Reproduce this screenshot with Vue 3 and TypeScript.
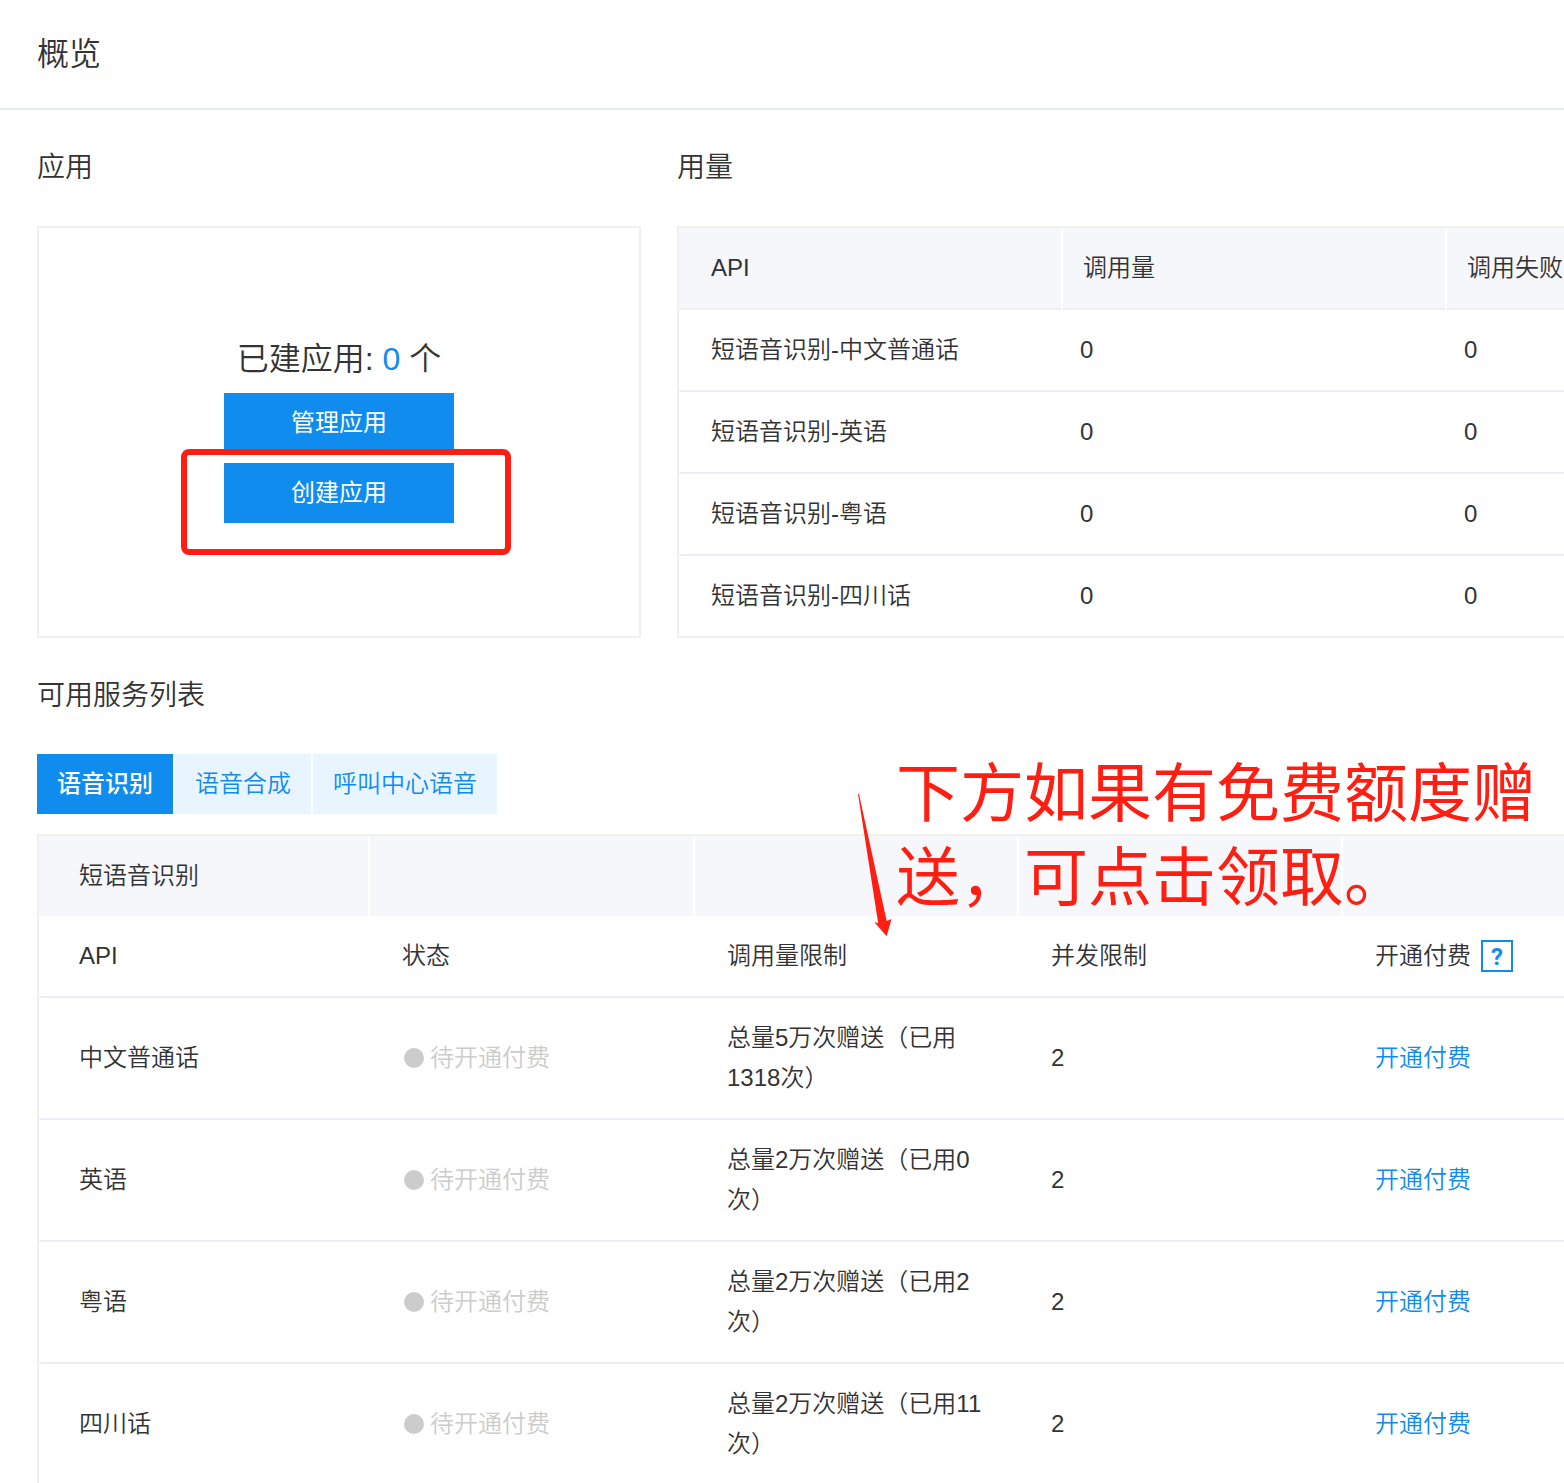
<script setup lang="ts">
import { ref } from 'vue'

interface UsageRow {
  api: string
  calls: number
  failures: number
}

interface ServiceRow {
  name: string
  quota: string
  concurrency: number
}

const appCount = ref<number>(0)
const tabs: string[] = ['语音识别', '语音合成', '呼叫中心语音']
const activeTab = ref<string>(tabs[0])

const usage: UsageRow[] = [
  { api: '短语音识别-中文普通话', calls: 0, failures: 0 },
  { api: '短语音识别-英语', calls: 0, failures: 0 },
  { api: '短语音识别-粤语', calls: 0, failures: 0 },
  { api: '短语音识别-四川话', calls: 0, failures: 0 },
]

const services: ServiceRow[] = [
  { name: '中文普通话', quota: '总量5万次赠送（已用1318次）', concurrency: 2 },
  { name: '英语', quota: '总量2万次赠送（已用0次）', concurrency: 2 },
  { name: '粤语', quota: '总量2万次赠送（已用2次）', concurrency: 2 },
  { name: '四川话', quota: '总量2万次赠送（已用11次）', concurrency: 2 },
]
</script>

<template>
  <div class="page">
    <header class="page-header">
      <h1>概览</h1>
    </header>

    <main class="content">
      <div class="overview">
        <section class="apps">
          <h2>应用</h2>
          <div class="card">
            <p class="count">已建应用: <a href="#apps">{{ appCount }}</a> 个</p>
            <div class="actions">
              <button type="button" class="primary">管理应用</button>
              <div class="marked">
                <button type="button" class="primary">创建应用</button>
                <span class="marker" aria-hidden="true"></span>
              </div>
            </div>
          </div>
        </section>

        <section class="usage">
          <h2>用量</h2>
          <table class="usage-table">
            <thead>
              <tr>
                <th scope="col">API</th>
                <th scope="col">调用量</th>
                <th scope="col">调用失败</th>
              </tr>
            </thead>
            <tbody>
              <tr v-for="row in usage" :key="row.api">
                <td>{{ row.api }}</td>
                <td>{{ row.calls }}</td>
                <td>{{ row.failures }}</td>
              </tr>
            </tbody>
          </table>
        </section>
      </div>

      <section class="services">
        <h2>可用服务列表</h2>
        <div class="tabs" role="tablist">
          <button
            v-for="tab in tabs"
            :key="tab"
            type="button"
            role="tab"
            class="tab"
            :class="{ active: tab === activeTab }"
            :aria-selected="tab === activeTab"
            @click="activeTab = tab"
          >{{ tab }}</button>
        </div>

        <table class="service-table">
          <colgroup>
            <col class="col-name" />
            <col class="col-status" />
            <col class="col-rest" />
            <col class="col-rest" />
            <col class="col-rest" />
          </colgroup>
          <thead>
            <tr class="group">
              <th scope="col">短语音识别</th>
              <th></th>
              <th></th>
              <th></th>
              <th></th>
            </tr>
            <tr class="labels">
              <th scope="col">API</th>
              <th scope="col">状态</th>
              <th scope="col">调用量限制</th>
              <th scope="col">并发限制</th>
              <th scope="col">
                <span class="with-help">开通付费<button type="button" class="help" aria-label="帮助">?</button></span>
              </th>
            </tr>
          </thead>
          <tbody>
            <tr v-for="row in services" :key="row.name">
              <td>{{ row.name }}</td>
              <td><span class="status">待开通付费</span></td>
              <td>{{ row.quota }}</td>
              <td>{{ row.concurrency }}</td>
              <td><a href="#pay">开通付费</a></td>
            </tr>
          </tbody>
        </table>

        <svg class="arrow" viewBox="0 0 36 144" width="36" height="144" aria-hidden="true">
          <path d="M1 1 L2 1 L29.7 128 L34.5 126 L29.7 143.3 L17.2 129 L21.2 130.3 Z" />
        </svg>
        <p class="note">下方如果有免费额度赠送，可点击领取。</p>
      </section>
    </main>
  </div>
</template>

<style>
body {
  margin: 0;
  background: #fff;
}
</style>

<style scoped>
.page {
  overflow: hidden;
  color: #333;
  font: 350 24px/40px "Liberation Sans", "Noto Sans CJK SC", sans-serif;
}

.page *,
.page *::before {
  box-sizing: border-box;
}

h1,
h2,
p {
  margin: 0;
  font-weight: inherit;
}

a {
  color: #108cee;
  text-decoration: none;
}

button {
  padding: 0;
  border: 0;
  font: inherit;
  cursor: pointer;
}

.page-header {
  padding: 0 37px;
  border-bottom: 2px solid #e6ebf0;
}

h1 {
  font-size: 32px;
  line-height: 108px;
}

h2 {
  font-size: 28px;
  line-height: 116px;
}

.content {
  padding-left: 37px;
}

.overview {
  display: flex;
  gap: 36px;
}

.apps {
  flex: 0 0 604px;
  display: flex;
  flex-direction: column;
}

.card {
  flex: 1;
  display: flex;
  flex-direction: column;
  align-items: center;
  justify-content: center;
  gap: 16px;
  border: 2px solid #f0f0f0;
}

.count {
  font-size: 32px;
  line-height: 36px;
}

.actions {
  display: flex;
  flex-direction: column;
  gap: 10px;
}

.primary {
  display: block;
  width: 230px;
  height: 60px;
  background: #108cee;
  color: #fff;
  font-weight: 400;
}

.marked {
  position: relative;
}

.marker {
  position: absolute;
  inset: -14px -57px -32px -43px;
  border: 6px solid #ff1f12;
  border-radius: 8px;
  pointer-events: none;
}

table {
  border-collapse: separate;
  border-spacing: 0;
  table-layout: fixed;
  border: 2px solid #f0f0f0;
  border-bottom: 0;
}

th,
td {
  padding: 20px 32px;
  border-bottom: 2px solid #ebeef8;
  text-align: left;
  vertical-align: middle;
  font-weight: inherit;
}

.usage-table {
  width: 1156px;
}

.usage-table th {
  padding-left: 20px;
  border-right: 2px solid #fff;
  border-bottom-color: #f0f0f0;
  background: linear-gradient(#f5f7fb, #f5f7fb) padding-box;
}

.usage-table td {
  padding-left: 17px;
}

.usage-table th:first-child,
.usage-table td:first-child {
  padding-left: 32px;
}

.usage-table tr:last-child td {
  border-bottom-color: #f0f0f0;
}

.services {
  position: relative;
}

.tabs {
  display: flex;
  gap: 2px;
  margin-bottom: 20px;
}

.tab {
  padding: 10px 20px;
  background: #e8f5ff;
  color: #108cee;
}

.tab.active {
  background: #108cee;
  color: #fff;
  font-weight: 500;
}

.service-table {
  width: 1632px;
}

.col-name {
  width: 331px;
}

.col-status {
  width: 325px;
}

.col-rest {
  width: 324px;
}

.service-table th:first-child,
.service-table td:first-child {
  padding-left: 40px;
}

.group th {
  border-right: 2px solid #fff;
  border-bottom: 0;
  background: #f5f7fb;
}

.with-help {
  display: flex;
  align-items: center;
  gap: 10px;
}

.help {
  width: 32px;
  height: 32px;
  border: 2px solid #108cee;
  background: #fff;
  color: #108cee;
  font-family: Roboto, sans-serif;
  font-weight: 700;
  line-height: 30px;
}

.status {
  display: flex;
  align-items: center;
  gap: 6px;
  color: #ccc;
}

.status::before {
  content: "";
  width: 20px;
  height: 20px;
  margin-left: 2px;
  border-radius: 50%;
  background: #ccc;
}

.arrow {
  position: absolute;
  top: 155px;
  left: 820px;
  fill: #ff1f12;
}

.note {
  position: absolute;
  top: 114px;
  left: 859px;
  width: 660px;
  color: #ff1f12;
  font-size: 64px;
  font-weight: 400;
  line-height: 84px;
}
</style>
